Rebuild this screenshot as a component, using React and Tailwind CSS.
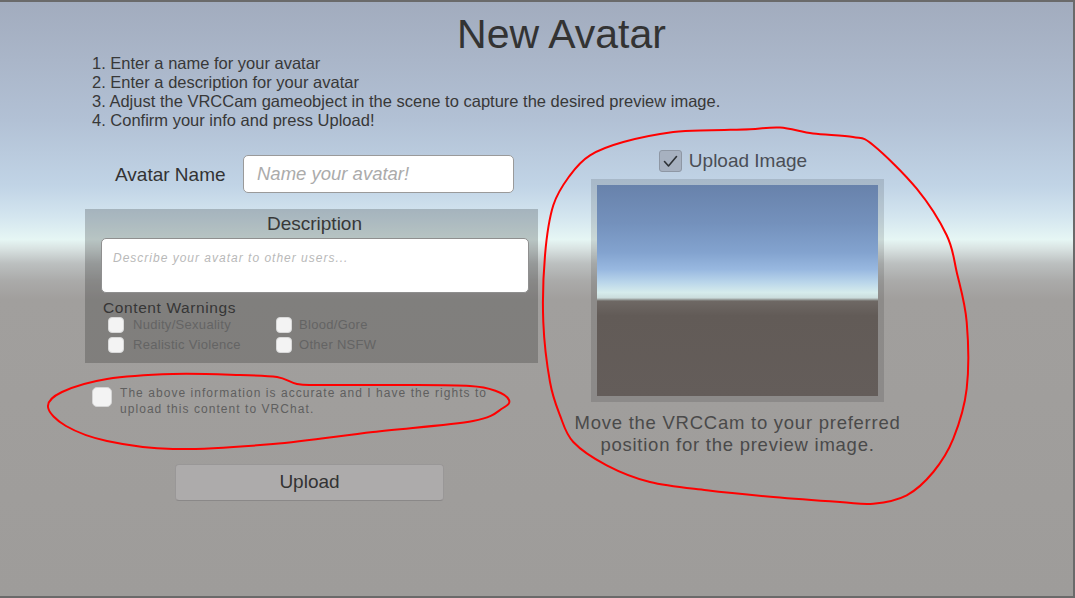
import React from "react";

function smooth(pts) {
  const n = pts.length;
  let d = `M${pts[0][0]},${pts[0][1]}`;
  for (let i = 0; i < n; i++) {
    const p0 = pts[(i - 1 + n) % n], p1 = pts[i], p2 = pts[(i + 1) % n], p3 = pts[(i + 2) % n];
    const c1 = [p1[0] + (p2[0] - p0[0]) / 6, p1[1] + (p2[1] - p0[1]) / 6];
    const c2 = [p2[0] - (p3[0] - p1[0]) / 6, p2[1] - (p3[1] - p1[1]) / 6];
    d += ` C${c1[0]},${c1[1]} ${c2[0]},${c2[1]} ${p2[0]},${p2[1]}`;
  }
  return d + " Z";
}

const rightLoop = [
  [711.7, 128.3], [750, 127.3], [780, 125.5], [813, 131.5], [853, 135], [873, 143], [916.7, 186.7],
  [946.7, 233.3], [956.7, 270], [966.7, 320], [966.7, 386.7], [953.3, 436.7], [933.3, 470],
  [906.7, 493.3], [873.3, 501.7], [840, 500], [773.3, 495], [706.7, 488.3], [650, 480],
  [606.7, 463.3], [573.3, 440], [560, 413.3], [550, 380], [543.3, 320], [545, 253.3],
  [553.3, 203.3], [570, 173.3], [590, 153.3], [623.3, 140], [673.3, 130],
];

const leftLoop = [
  [277, 375], [240, 373], [173, 372], [107, 377], [62, 390], [48, 405], [66, 424], [107, 439],
  [173, 447], [273, 442], [373, 430], [473, 419], [503, 406], [509, 398], [496, 389],
  [470, 384], [400, 383], [320, 383], [297, 382],
];

function SmallBox({ size = "w-4 h-4" }) {
  return <div className={`${size} rounded-[4px] bg-[#f3f3f3] border border-[#d8d8d8] shrink-0`} />;
}

export default function App() {
  return (
    <div className="relative w-[1075px] h-[598px] overflow-hidden border-t-2 border-r-2 border-b-2 border-[#6a6a6a] font-['Liberation_Sans',Arial,sans-serif] bg-[linear-gradient(to_bottom,#a2acbe_0%,#aab6c9_10%,#b2c1d5_20%,#c1d4e6_31%,#d3e5ef_36%,#e6f6f4_40%,#d9e3e2_41.5%,#bcc0c0_44%,#aaaaa9_47%,#a19f9d_50%,#9e9c9a_100%)]">
      <h1 className="pl-[50px] mt-[12px] text-center text-[41px] leading-[40px] text-[#333333]">New Avatar</h1>

      <div className="pl-[92px] text-[16.5px] leading-[19px] text-[#383838]">
        <div>1. Enter a name for your avatar</div>
        <div>2. Enter a description for your avatar</div>
        <div>3. Adjust the VRCCam gameobject in the scene to capture the desired preview image.</div>
        <div>4. Confirm your info and press Upload!</div>
      </div>

      <div className="flex">
        {/* Left column */}
        <div className="ml-[85px] w-[453px] flex flex-col">
          <div className="mt-[25px] flex items-center h-[38px]">
            <div className="pl-[30px] w-[158px] pt-[2px] text-[19px] leading-[22px] text-[#333333]">Avatar Name</div>
            <div className="w-[271px] h-[38px] bg-white border border-[#9a9a9a] rounded-[5px] flex items-center pl-[13px]">
              <span className="italic text-[18.5px] text-[#ababab]">Name your avatar!</span>
            </div>
          </div>

          <div className="mt-[16px] h-[154px] bg-black/20 flex flex-col">
            <div className="pt-[4px] text-center text-[19px] leading-[22px] text-[#383838] pl-[6px]">Description</div>
            <div className="mt-[3px] ml-[16px] w-[428px] h-[55px] bg-white border border-[#8f8f8f] rounded-[5px] pl-[11px] pt-[6px]">
              <span className="italic text-[12px] leading-[14px] tracking-[1px] text-[#b9b9b9]">Describe your avatar to other users...</span>
            </div>
            <div className="mt-[6px] ml-[18px] text-[15.5px] leading-[17px] tracking-[0.6px] text-[#363636]">Content Warnings</div>
            <div className="ml-[23px] mt-[1px] grid grid-cols-[168px_auto] gap-y-[4px] text-[13px] leading-[16px] tracking-[0.3px] text-[#646464]">
              <div className="flex items-center gap-[9px]"><SmallBox /><span>Nudity/Sexuality</span></div>
              <div className="flex items-center gap-[7px]"><SmallBox /><span>Blood/Gore</span></div>
              <div className="flex items-center gap-[9px]"><SmallBox /><span>Realistic Violence</span></div>
              <div className="flex items-center gap-[7px]"><SmallBox /><span>Other NSFW</span></div>
            </div>
          </div>

          <div className="mt-[22px] ml-[7px] flex items-start gap-[8px]">
            <div className="mt-[2px] w-[20px] h-[20px] rounded-[5px] bg-[#f3f3f3] border border-[#d5d5d5] shrink-0" />
            <div className="text-[12px] leading-[16px] tracking-[1.05px] text-[#5f5f5f]">
              The above information is accurate and I have the rights to<br />upload this content to VRChat.
            </div>
          </div>

          <div className="mt-[47px] ml-[90px] w-[269px] h-[37px] rounded-[4px] bg-[#adabab] border border-[#999797] border-b-[#8a8888] flex items-center justify-center text-[19px] text-[#333333]">
            Upload
          </div>
        </div>

        {/* Right column */}
        <div className="ml-[53px] w-[293px] flex flex-col items-center">
          <div className="mt-[20px] h-[22px] flex items-center gap-[7px] pr-[9px]">
            <div className="w-[23px] h-[22px] rounded-[3px] bg-[#a7b1c0] border border-[#8e97a4] flex items-center justify-center">
              <svg width="15" height="13" viewBox="0 0 15 13" fill="none">
                <path d="M1.5 6.5 L5.5 11 L13.5 1.5" stroke="#2e3236" strokeWidth="1.6" strokeLinecap="round" strokeLinejoin="round" />
              </svg>
            </div>
            <span className="text-[19px] leading-[22px] text-[#4a4e56]">Upload Image</span>
          </div>
          <div className="mt-[7px] w-[293px] h-[223px] p-[6px] bg-black/[0.12]">
            <div className="w-full h-full bg-[linear-gradient(to_bottom,#6882ab_0%,#7491bc_18%,#83a3cf_32%,#98b8e0_40%,#b9d5ea_46%,#d6ecec_51%,#cadcdc_53.5%,#6e6864_55%,#625b57_62%,#645d5a_100%)]" />
          </div>
          <div className="mt-[10px] whitespace-nowrap text-center text-[18.5px] leading-[22px] tracking-[0.75px] text-[#4a4a4a]">
            Move the VRCCam to your preferred<br />position for the preview image.
          </div>
        </div>
      </div>

      <svg className="absolute inset-0 pointer-events-none" width="1075" height="598" viewBox="0 0 1075 598">
        <path d={smooth(rightLoop)} fill="none" stroke="#ff0000" strokeWidth="2" />
        <path d={smooth(leftLoop)} fill="none" stroke="#ff0000" strokeWidth="2" />
      </svg>
    </div>
  );
}
